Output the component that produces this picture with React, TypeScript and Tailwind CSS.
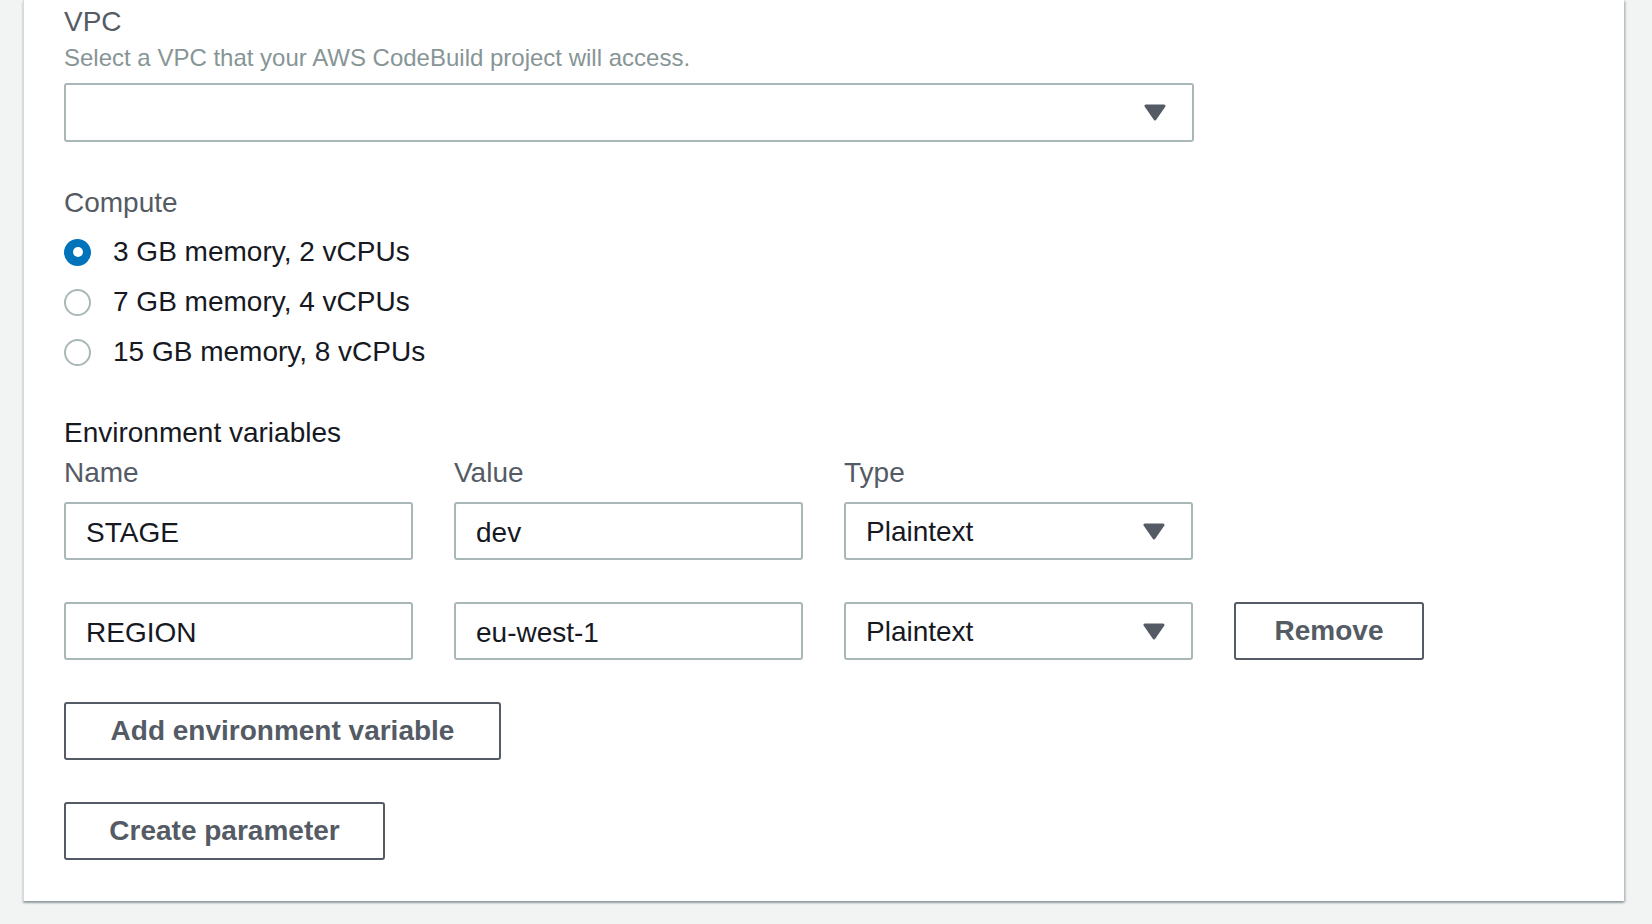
import React from "react";

const font = { fontFamily: '"Liberation Sans", Arial, sans-serif' };

const Caret: React.FC = () => (
  <svg width="22" height="17" viewBox="0 0 22 17" className="shrink-0">
    <path d="M2 2 H20 L11 15 Z" fill="#545b64" stroke="#545b64" strokeWidth="3" strokeLinejoin="round" />
  </svg>
);

const Radio: React.FC<{ label: string; checked?: boolean }> = ({ label, checked }) => (
  <div className="flex items-center h-[50px]">
    {checked ? (
      <span className="w-[27px] h-[27px] rounded-full bg-[#0073bb] flex items-center justify-center">
        <span className="w-[10px] h-[10px] rounded-full bg-white" />
      </span>
    ) : (
      <span className="w-[27px] h-[27px] rounded-full border-2 border-[#aab7b8] bg-white" />
    )}
    <span className="ml-[22px] text-[28px] text-[#16191f] leading-[36px]">{label}</span>
  </div>
);

const TextBox: React.FC<{ value: string }> = ({ value }) => (
  <div className="w-[349px] h-[58px] border-2 border-[#aab7b8] rounded-[3px] flex items-center pl-[20px] pt-[3px] text-[28px] text-[#16191f]">
    {value}
  </div>
);

const TypeSelect: React.FC = () => (
  <div className="w-[349px] h-[58px] border-2 border-[#aab7b8] rounded-[3px] flex items-center justify-between pl-[20px] pr-[26px] text-[28px] text-[#16191f]">
    <span className="pt-[2px]">Plaintext</span>
    <Caret />
  </div>
);

const Button: React.FC<{ label: string; width: string }> = ({ label, width }) => (
  <button
    className={`${width} h-[58px] border-2 border-[#545b64] rounded-[3px] bg-white text-[28px] font-bold text-[#545b64] flex items-center justify-center`}
  >
    {label}
  </button>
);

const envVars = [
  { name: "STAGE", value: "dev", removable: false },
  { name: "REGION", value: "eu-west-1", removable: true },
];

const App: React.FC = () => {
  return (
    <div className="w-[1652px] h-[924px] bg-[#f2f3f3] pl-[23px] overflow-hidden" style={font}>
      <div className="w-[1601px] h-[901px] bg-white border-l border-[#d5dbdb] shadow-[0_2px_2px_0_rgba(0,28,36,0.35),2px_1px_2px_0_rgba(0,28,36,0.15)] pl-[40px] pt-[4px]">
        {/* VPC */}
        <div className="text-[28px] leading-[36px] text-[#545b64]">VPC</div>
        <div className="text-[24px] leading-[36px] text-[#879596]">
          Select a VPC that your AWS CodeBuild project will access.
        </div>
        <div className="mt-[7px] w-[1130px] h-[59px] border-2 border-[#aab7b8] rounded-[3px] flex items-center justify-end pr-[26px]">
          <Caret />
        </div>

        {/* Compute */}
        <div className="mt-[43px] text-[28px] leading-[36px] text-[#545b64]">Compute</div>
        <div className="mt-[6px]">
          <Radio label="3 GB memory, 2 vCPUs" checked />
          <Radio label="7 GB memory, 4 vCPUs" />
          <Radio label="15 GB memory, 8 vCPUs" />
        </div>

        {/* Environment variables */}
        <div className="mt-[38px] text-[28px] leading-[36px] text-[#16191f]">Environment variables</div>
        <div className="mt-[4px] flex gap-[41px] text-[28px] leading-[36px] text-[#545b64]">
          <div className="w-[349px]">Name</div>
          <div className="w-[349px]">Value</div>
          <div className="w-[349px]">Type</div>
        </div>
        <div className="mt-[11px] flex flex-col gap-[42px]">
          {envVars.map((v) => (
            <div key={v.name} className="flex gap-[41px]">
              <TextBox value={v.name} />
              <TextBox value={v.value} />
              <TypeSelect />
              {v.removable && <Button label="Remove" width="w-[190px]" />}
            </div>
          ))}
        </div>

        <div className="mt-[42px]">
          <Button label="Add environment variable" width="w-[437px]" />
        </div>
        <div className="mt-[42px]">
          <Button label="Create parameter" width="w-[321px]" />
        </div>
      </div>
    </div>
  );
};

export default App;
